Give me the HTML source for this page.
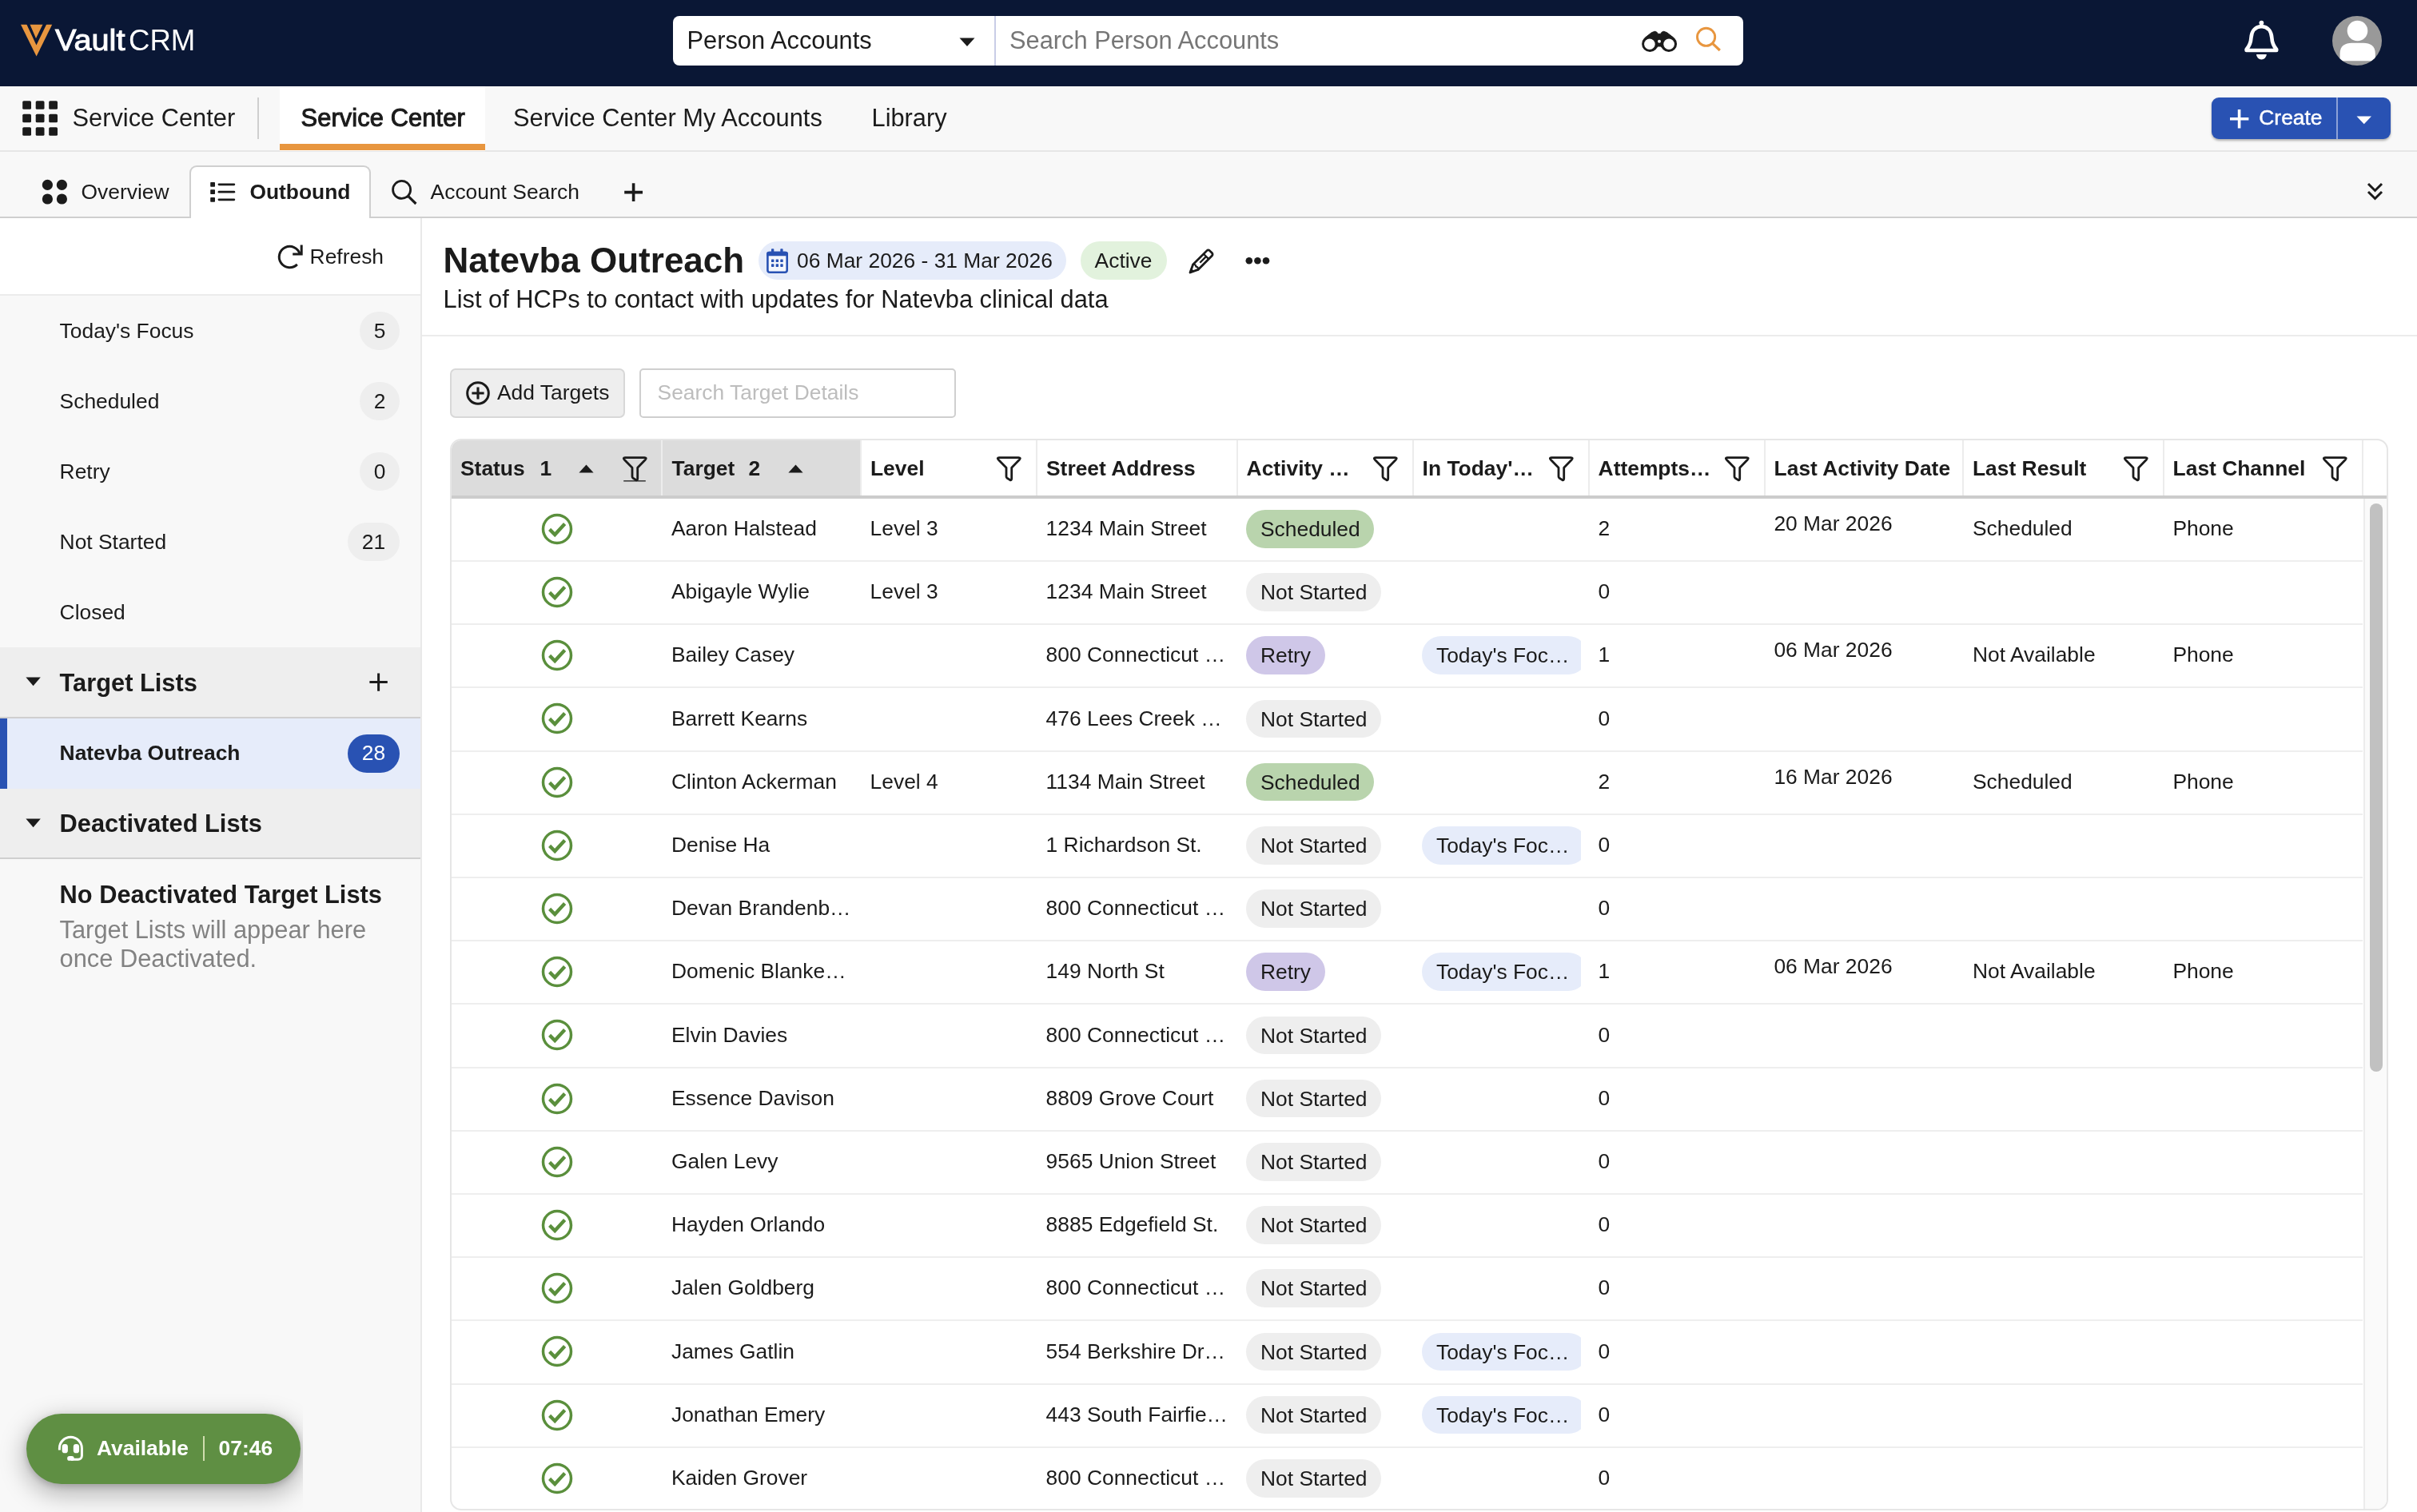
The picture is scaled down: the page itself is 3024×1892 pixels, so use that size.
<!DOCTYPE html>
<html lang="en"><head><meta charset="utf-8"><title>Vault CRM</title><style>
*{box-sizing:border-box;margin:0;padding:0}
html,body{width:3024px;height:1892px;overflow:hidden;background:#f8f8f8}
body{font-family:"Liberation Sans",sans-serif;color:#1b1b1b;font-size:26.4px;position:relative;-webkit-font-smoothing:antialiased}
#w{position:absolute;left:0;top:0;width:3024px;height:1892px;will-change:transform}
.a{position:absolute}
.t{position:absolute;white-space:nowrap;line-height:1}
.b{font-weight:bold}
svg{position:absolute;overflow:visible}
#top{left:0;top:0;width:3024px;height:108px;background:#0a1735}
#nav{left:0;top:108px;width:3024px;height:82px;background:#f8f8f8;border-bottom:2px solid #e6e6e6}
#sub{left:0;top:190px;width:3024px;height:83px;background:#f8f8f8;border-bottom:2px solid #cfcfcf}
#left{left:0;top:273px;width:526px;height:1619px;background:#f8f8f8}
#main{left:528px;top:273px;width:2496px;height:1619px;background:#fff}
.pill{position:absolute;border-radius:40px;white-space:nowrap;line-height:1}
.badge{position:absolute;height:48px;border-radius:24px;background:#eeeeee;text-align:center;line-height:48px;font-size:26.4px}
.hl{position:absolute;height:2px;background:#eeeeee}
</style></head><body><div id="w">
<div id="top" class="a">
<svg style="left:0;top:0" width="260" height="108" viewBox="0 0 260 108">
<polygon points="26,30.8 65.2,30.8 45.6,70.6" fill="#e8963f"/>
<polygon points="33.1,30 37.2,30 45,48.1 53.8,30 58.4,30 45.5,56.4" fill="#0a1735"/>
</svg>
</div>
<div class="t " style="left:68.85px;top:32px;font-size:37.3px;color:#fff;transform-origin:0 50%;transform:translateY(0.2px) scaleX(1.063);-webkit-text-stroke:1px #fff;">Vault</div>
<div class="t " style="left:161.2px;top:32px;font-size:37.3px;color:#fff;transform-origin:0 50%;transform:translateY(0.2px) scaleX(.981);">CRM</div>
<div class="a" style="left:842px;top:20px;width:1339px;height:62px;background:#fff;border-radius:8px"></div>
<div class="a" style="left:1244px;top:20px;width:2px;height:62px;background:#c9cde6"></div>
<div class="t " style="left:859.5px;top:36px;font-size:30.8px;">Person Accounts</div>
<svg style="left:1200px;top:47px" width="20" height="12" viewBox="0 0 20 12"><path d="M0.5,0.5 L19.5,0.5 L10,11 Z" fill="#1b1b1b"/></svg>
<div class="t " style="left:1263px;top:36px;font-size:30.8px;color:#767676;">Search Person Accounts</div>
<svg style="left:2052px;top:37px" width="48" height="30" viewBox="0 0 48 30">
<path d="M6.4,10 L14.4,3.7 L18.5,2.3 L21,3.3 L22.5,5.4 L25.5,5.4 L27,3.3 L29.5,2.3 L33.6,3.7 L41.6,10 L36,21.6 L12,21.6 Z" fill="#1b1b1b" stroke="#1b1b1b" stroke-width="1" stroke-linejoin="round"/>
<circle cx="12.3" cy="17.9" r="10.2" fill="#1b1b1b"/><circle cx="35.9" cy="17.9" r="10.2" fill="#1b1b1b"/>
<circle cx="11.9" cy="18.2" r="6.8" fill="#fff"/><circle cx="36.1" cy="18.2" r="6.8" fill="#fff"/><circle cx="24" cy="14.7" r="2" fill="#fff"/>
<path d="M22,21.6 L26,21.6 L25.4,24.4 L22.6,24.4 Z" fill="#fff"/>
</svg>
<svg style="left:2120px;top:32px" width="36" height="36" viewBox="0 0 36 36">
<circle cx="14.6" cy="14.3" r="11.1" fill="none" stroke="#e8963f" stroke-width="2.9"/>
<line x1="22.6" y1="22.3" x2="31.8" y2="31" stroke="#e8963f" stroke-width="3.2"/>
</svg>
<svg style="left:2800px;top:20px" width="60" height="62" viewBox="0 0 60 62">
<path d="M29.4,13 C20.5,13.6 17,20 16.5,27 C16.1,34 14.4,37.6 10.6,41.8 L10.6,43 L48.2,43 L48.2,41.8 C44.4,37.6 42.7,34 42.3,27 C41.8,20 38.3,13.6 29.4,13 Z" fill="none" stroke="#fff" stroke-width="4.6" stroke-linejoin="round"/>
<circle cx="29.4" cy="8.6" r="2.9" fill="#fff"/>
<path d="M23,48 L35.8,48 A6.4,6.4 0 0 1 23,48 Z" fill="#fff"/>
</svg>
<svg style="left:2918px;top:20px" width="62" height="62" viewBox="0 0 62 62">
<defs><clipPath id="av"><circle cx="31" cy="31" r="31"/></clipPath></defs>
<circle cx="31" cy="31" r="31" fill="#999999"/>
<g clip-path="url(#av)"><circle cx="31.5" cy="18.5" r="12.8" fill="#fff"/>
<path d="M9.6,56.3 L9.6,47 C9.6,37.4 16,33.8 24.5,33.8 L39,33.8 C47.4,33.8 53.8,37.4 53.8,47 L53.8,56.3 Z" fill="#fff"/></g>
</svg>
<div id="nav" class="a"></div>
<svg style="left:0;top:0" width="100" height="190" viewBox="0 0 100 190"><rect x="28.2" y="126.2" width="10.8" height="10.6" rx="1.6" fill="#1b1b1b"/><rect x="44.7" y="126.2" width="10.8" height="10.6" rx="1.6" fill="#1b1b1b"/><rect x="61.2" y="126.2" width="10.8" height="10.6" rx="1.6" fill="#1b1b1b"/><rect x="28.2" y="142.7" width="10.8" height="10.6" rx="1.6" fill="#1b1b1b"/><rect x="44.7" y="142.7" width="10.8" height="10.6" rx="1.6" fill="#1b1b1b"/><rect x="61.2" y="142.7" width="10.8" height="10.6" rx="1.6" fill="#1b1b1b"/><rect x="28.2" y="159.2" width="10.8" height="10.6" rx="1.6" fill="#1b1b1b"/><rect x="44.7" y="159.2" width="10.8" height="10.6" rx="1.6" fill="#1b1b1b"/><rect x="61.2" y="159.2" width="10.8" height="10.6" rx="1.6" fill="#1b1b1b"/></svg>
<div class="t " style="left:90.5px;top:133px;font-size:30.8px;">Service Center</div>
<div class="a" style="left:322px;top:122px;width:2px;height:52px;background:#cfcfcf"></div>
<div class="a" style="left:350px;top:108px;width:257px;height:81px;background:#fff"></div>
<div class="a" style="left:350px;top:180px;width:257px;height:8px;background:#e8963f"></div>
<div class="t " style="left:376.5px;top:133px;font-size:30.8px;-webkit-text-stroke:1.05px #1b1b1b;letter-spacing:0.12px;">Service Center</div>
<div class="t " style="left:642px;top:133px;font-size:30.8px;">Service Center My Accounts</div>
<div class="t " style="left:1090.5px;top:133px;font-size:30.8px;">Library</div>
<div class="a" style="left:2767px;top:122px;width:224px;height:52px;background:#2952b3;border-radius:9px;box-shadow:0 2px 3px rgba(0,0,0,.3)"></div>
<div class="a" style="left:2923px;top:122px;width:2px;height:52px;background:#8da2d8"></div>
<svg style="left:2789px;top:136px" width="26" height="26" viewBox="0 0 26 26"><path d="M12.6,1 V24.4 M1,12.7 H24.4" stroke="#fff" stroke-width="3.6" fill="none"/></svg>
<div class="t " style="left:2826.3px;top:134px;font-size:26.4px;color:#fff;-webkit-text-stroke:0.45px #fff;">Create</div>
<svg style="left:2947.5px;top:144.5px" width="20" height="11" viewBox="0 0 20 11"><path d="M0.5,0.5 L19,0.5 L9.75,10.3 Z" fill="#fff"/></svg>
<div id="sub" class="a"></div>
<svg style="left:0;top:0" width="100" height="273" viewBox="0 0 100 273"><circle cx="59.4" cy="231.4" r="6.6" fill="#1b1b1b"/><circle cx="59.4" cy="249" r="6.6" fill="#1b1b1b"/><circle cx="77.4" cy="231.4" r="6.6" fill="#1b1b1b"/><circle cx="77.4" cy="249" r="6.6" fill="#1b1b1b"/></svg>
<div class="t " style="left:101.5px;top:227px;font-size:26.4px;">Overview</div>
<div class="a" style="left:237px;top:207px;width:227px;height:68px;background:#fff;border:2px solid #cfcfcf;border-bottom:none;border-radius:9px 9px 0 0"></div>
<svg style="left:0;top:0" width="300" height="273" viewBox="0 0 300 273"><rect x="263.2" y="227.9" width="5.8" height="5.8" rx="0.8" fill="#1b1b1b"/><rect x="272.6" y="229.45000000000002" width="21.6" height="2.7" rx="1.3" fill="#1b1b1b"/><rect x="263.2" y="237.29999999999998" width="5.8" height="5.8" rx="0.8" fill="#1b1b1b"/><rect x="272.6" y="238.85" width="21.6" height="2.7" rx="1.3" fill="#1b1b1b"/><rect x="263.2" y="246.9" width="5.8" height="5.8" rx="0.8" fill="#1b1b1b"/><rect x="272.6" y="248.45000000000002" width="21.6" height="2.7" rx="1.3" fill="#1b1b1b"/></svg>
<div class="t b" style="left:312.4px;top:227px;font-size:26.4px;">Outbound</div>
<svg style="left:489px;top:224px" width="34" height="34" viewBox="0 0 34 34">
<circle cx="13.6" cy="13.4" r="11" fill="none" stroke="#1b1b1b" stroke-width="2.8"/>
<line x1="21.6" y1="21.4" x2="31.4" y2="31" stroke="#1b1b1b" stroke-width="3.2"/></svg>
<div class="t " style="left:538.6px;top:227px;font-size:26.4px;">Account Search</div>
<svg style="left:780px;top:228px" width="26" height="26" viewBox="0 0 26 26"><path d="M12.6,1.2 V24 M1.2,12.6 H24" stroke="#1b1b1b" stroke-width="3.6" fill="none"/></svg>
<svg style="left:2961px;top:228px" width="22" height="24" viewBox="0 0 22 24"><path d="M2,2 L10.5,10.5 L19,2 M2,12 L10.5,20.5 L19,12" stroke="#1b1b1b" stroke-width="3" fill="none"/></svg>
<div id="left" class="a"></div>
<div class="a" style="left:526px;top:273px;width:2px;height:1619px;background:#e9e9e9"></div>
<div class="a" style="left:0;top:273px;width:526px;height:97px;background:#fff;border-bottom:2px solid #ececec"></div>
<svg style="left:345.4px;top:302.6px" width="36" height="36" viewBox="0 0 36 36">
<path d="M30.2,15 A13.2,13.2 0 1 0 26.8,27.9" fill="none" stroke="#1b1b1b" stroke-width="3"/>
<path d="M32.2,3.6 L32.2,15 L21.2,15" fill="none" stroke="#1b1b1b" stroke-width="3"/></svg>
<div class="t " style="left:387.6px;top:308px;font-size:26.4px;">Refresh</div>
<div class="t " style="left:74.6px;top:401px;font-size:26.4px;">Today's Focus</div>
<div class="badge" style="left:450.40000000000003px;top:390px;width:49.4px">5</div>
<div class="t " style="left:74.6px;top:489px;font-size:26.4px;">Scheduled</div>
<div class="badge" style="left:450.40000000000003px;top:478px;width:49.4px">2</div>
<div class="t " style="left:74.6px;top:577px;font-size:26.4px;">Retry</div>
<div class="badge" style="left:450.40000000000003px;top:566px;width:49.4px">0</div>
<div class="t " style="left:74.6px;top:665px;font-size:26.4px;">Not Started</div>
<div class="badge" style="left:435.0px;top:654px;width:64.8px">21</div>
<div class="t " style="left:74.6px;top:753px;font-size:26.4px;">Closed</div>
<div class="a" style="left:0;top:810px;width:526px;height:89px;background:#eeeeee;border-bottom:2px solid #cfcfcf"></div>
<svg style="left:31px;top:846.6px" width="22" height="13" viewBox="0 0 22 13"><path d="M1.4,0.5 L19.8,0.5 L10.6,11.3 Z" fill="#1b1b1b"/></svg>
<div class="t b" style="left:74.6px;top:840px;font-size:30.8px;">Target Lists</div>
<svg style="left:461px;top:841px" width="26" height="26" viewBox="0 0 26 26"><path d="M12.6,1.4 V23.8 M1.4,12.6 H23.8" stroke="#1b1b1b" stroke-width="3" fill="none"/></svg>
<div class="a" style="left:0;top:899px;width:526px;height:88px;background:#e6ecfa"></div>
<div class="a" style="left:0;top:899px;width:9px;height:88px;background:#2952b3"></div>
<div class="t b" style="left:74.6px;top:929px;font-size:26.4px;">Natevba Outreach</div>
<div class="badge" style="left:435px;top:919px;width:65px;background:#2952b3;color:#fff;line-height:46px">28</div>
<div class="a" style="left:0;top:987px;width:526px;height:88px;background:#eeeeee;border-bottom:2px solid #cfcfcf"></div>
<svg style="left:31px;top:1023.6px" width="22" height="13" viewBox="0 0 22 13"><path d="M1.4,0.5 L19.8,0.5 L10.6,11.3 Z" fill="#1b1b1b"/></svg>
<div class="t b" style="left:74.6px;top:1016px;font-size:30.8px;">Deactivated Lists</div>
<div class="t b" style="left:74.6px;top:1105px;font-size:30.8px;">No Deactivated Target Lists</div>
<div class="t " style="left:74.6px;top:1149px;font-size:30.8px;color:#828282;">Target Lists will appear here</div>
<div class="t " style="left:74.6px;top:1185px;font-size:30.8px;color:#828282;">once Deactivated.</div>
<div class="a" style="left:0;top:1650px;width:379px;height:242px;overflow:hidden"><div class="a" style="left:33px;top:119px;width:343px;height:88px;border-radius:44px;background:#5f8f43;box-shadow:0 10px 30px 4px rgba(0,0,0,.26), 0 3px 8px rgba(0,0,0,.18)"></div></div>
<svg style="left:70px;top:1794px" width="38" height="38" viewBox="0 0 38 38">
<path d="M4.4,20.4 V18.3 A14,14 0 0 1 32.4,18.3 V27.6 A4.7,4.7 0 0 1 27.7,32.3 H19" fill="none" stroke="#fff" stroke-width="3"/>
<rect x="7.6" y="13.1" width="7.3" height="11.2" rx="3.4" fill="#fff"/><rect x="21.8" y="13.1" width="7.3" height="11.2" rx="3.4" fill="#fff"/>
<rect x="14.1" y="28" width="8.6" height="5.8" rx="2.9" fill="#fff"/>
</svg>
<div class="t b" style="left:121px;top:1799px;font-size:26.4px;color:#fff;">Available</div>
<div class="a" style="left:254px;top:1797px;width:2px;height:31px;background:#cfdcae"></div>
<div class="t b" style="left:273.6px;top:1799px;font-size:26.4px;color:#fff;">07:46</div>
<div id="main" class="a"></div>
<div class="t b" style="left:554.6px;top:304px;font-size:44px;">Natevba Outreach</div>
<div class="pill" style="left:949px;top:302px;width:385px;height:48px;background:#e6ecfa"></div>
<svg style="left:958px;top:311px" width="30" height="32" viewBox="0 0 30 32"><rect x="2.4" y="5.1" width="24.3" height="24.6" rx="2.8" fill="#f4f7fd" stroke="#2952b3" stroke-width="2.6"/><path d="M1.1,9.2 V6.6 A2.8,2.8 0 0 1 3.9,3.8 H25.2 A2.8,2.8 0 0 1 28,6.6 V9.2 Z" fill="#2952b3"/><rect x="7" y="0.2" width="3.3" height="6" rx="0.8" fill="#2952b3"/><rect x="18.3" y="0.2" width="3.3" height="6" rx="0.8" fill="#2952b3"/><rect x="7.0" y="13.4" width="3.4" height="3.7" rx="0.7" fill="#2952b3"/><rect x="12.65" y="13.4" width="3.4" height="3.7" rx="0.7" fill="#2952b3"/><rect x="18.3" y="13.4" width="3.4" height="3.7" rx="0.7" fill="#2952b3"/><rect x="7.0" y="19.2" width="3.4" height="3.7" rx="0.7" fill="#2952b3"/><rect x="12.65" y="19.2" width="3.4" height="3.7" rx="0.7" fill="#2952b3"/><rect x="18.3" y="19.2" width="3.4" height="3.7" rx="0.7" fill="#2952b3"/></svg>
<div class="t " style="left:997px;top:313px;font-size:26.4px;">06 Mar 2026 - 31 Mar 2026</div>
<div class="pill" style="left:1352px;top:302px;width:107.6px;height:48px;background:#e2f2dd"></div>
<div class="t " style="left:1369.6px;top:313px;font-size:26.4px;">Active</div>
<svg style="left:1486px;top:310px" width="34" height="34" viewBox="0 0 34 34">
<g transform="translate(3,31) rotate(-45)" fill="none" stroke="#1b1b1b" stroke-linejoin="round" stroke-linecap="round">
<path d="M0,0 L9.6,-4.5 H34.2 A2.4,2.4 0 0 1 36.6,-2.1 V2.1 A2.4,2.4 0 0 1 34.2,4.5 H9.6 Z" stroke-width="2.8"/>
<path d="M28.4,-4.5 V4.5 M17.4,0 H28.4" stroke-width="2.3" stroke-linecap="butt"/>
<path d="M9.6,-4.5 Q12.4,-2.3 10.4,0 Q12.4,2.3 9.6,4.5" stroke-width="2.2"/>
<path d="M0,0 L4,-1.9 V1.9 Z" fill="#1b1b1b" stroke-width="1.6"/>
</g></svg>
<svg style="left:1556px;top:320px" width="34" height="12" viewBox="0 0 34 12"><circle cx="6.8" cy="6.3" r="4.3" fill="#1b1b1b"/><circle cx="17.4" cy="6.3" r="4.3" fill="#1b1b1b"/><circle cx="28" cy="6.3" r="4.3" fill="#1b1b1b"/></svg>
<div class="t " style="left:554.6px;top:360px;font-size:30.8px;">List of HCPs to contact with updates for Natevba clinical data</div>
<div class="a" style="left:528px;top:419px;width:2496px;height:2px;background:#ececec"></div>
<div class="a" style="left:563px;top:461px;width:219px;height:62px;background:#eeeeee;border:2px solid #d8d8d8;border-radius:7px"></div>
<svg style="left:583.4px;top:476.5px" width="30" height="30" viewBox="0 0 30 30"><circle cx="15" cy="15" r="13.3" fill="none" stroke="#1b1b1b" stroke-width="3"/><path d="M15,7.4 V22.6 M7.4,15 H22.6" stroke="#1b1b1b" stroke-width="3.1" fill="none"/></svg>
<div class="t " style="left:622px;top:478px;font-size:26.4px;">Add Targets</div>
<div class="a" style="left:800px;top:461px;width:396px;height:62px;background:#fff;border:2px solid #cfcfcf;border-radius:5px"></div>
<div class="t " style="left:822.6px;top:478px;font-size:26.4px;color:#bdbdbd;">Search Target Details</div>
<div class="a" style="left:563px;top:549px;width:2425px;height:1341px;border:2px solid #e6e6e6;border-radius:14px;background:#fff;overflow:hidden">
<div class="a" style="left:0;top:0;width:262px;height:69px;background:#dcdcdc"></div>
<div class="a" style="left:263px;top:0;width:248px;height:69px;background:#dcdcdc"></div>
<div class="a" style="left:262px;top:0;width:2px;height:69px;background:#ededed"></div>
<div class="a" style="left:511px;top:0;width:2px;height:69px;background:#ececec"></div>
<div class="a" style="left:731px;top:0;width:2px;height:69px;background:#ececec"></div>
<div class="a" style="left:982px;top:0;width:2px;height:69px;background:#ececec"></div>
<div class="a" style="left:1202px;top:0;width:2px;height:69px;background:#ececec"></div>
<div class="a" style="left:1422px;top:0;width:2px;height:69px;background:#ececec"></div>
<div class="a" style="left:1642px;top:0;width:2px;height:69px;background:#ececec"></div>
<div class="a" style="left:1890px;top:0;width:2px;height:69px;background:#ececec"></div>
<div class="a" style="left:2141px;top:0;width:2px;height:69px;background:#ececec"></div>
<div class="a" style="left:2390px;top:0;width:2px;height:69px;background:#ececec"></div>
<div class="a" style="left:0;top:69px;width:2425px;height:4px;background:#cccccc"></div>
<div class="a" style="left:2392px;top:73px;width:32px;height:1300px;background:#fafafa;border-left:2px solid #ececec"></div>
<div class="a" style="left:2400px;top:79px;width:16px;height:711px;background:#c1c1c1;border-radius:8px"></div>
</div>
<div class="t b" style="left:576px;top:573px;font-size:26.4px;">Status</div>
<div class="t b" style="left:675.6px;top:573px;font-size:26.4px;">1</div>
<svg style="left:723.6px;top:580.6px" width="19" height="11" viewBox="0 0 19 11"><path d="M0.4,10.6 L18.6,10.6 L9.5,0.6 Z" fill="#1b1b1b"/></svg>
<svg style="left:779.4px;top:570.6px" width="30" height="34" viewBox="0 0 30 34"><path d="M3,1.7 H27.4 Q30.6,1.7 28.4,4.2 L18.7,14.2 V27.8 Q18.7,30.6 16.4,29.4 L13,27.2 Q12,26.5 12,25.2 V14.2 L2.2,4.2 Q0,1.7 3,1.7 Z" fill="none" stroke="#1b1b1b" stroke-width="2.8" stroke-linejoin="round"/><rect x="1.2" y="30.2" width="27.6" height="1.3" fill="#1b1b1b"/></svg>
<div class="t b" style="left:840.6px;top:573px;font-size:26.4px;">Target</div>
<div class="t b" style="left:936.6px;top:573px;font-size:26.4px;">2</div>
<svg style="left:986.4px;top:580.6px" width="19" height="11" viewBox="0 0 19 11"><path d="M0.4,10.6 L18.6,10.6 L9.5,0.6 Z" fill="#1b1b1b"/></svg>
<div class="t b" style="left:1089px;top:573px;font-size:26.4px;">Level</div>
<svg style="left:1247.4px;top:570.6px" width="30" height="34" viewBox="0 0 30 34"><path d="M3,1.7 H27.4 Q30.6,1.7 28.4,4.2 L18.7,14.2 V27.8 Q18.7,30.6 16.4,29.4 L13,27.2 Q12,26.5 12,25.2 V14.2 L2.2,4.2 Q0,1.7 3,1.7 Z" fill="none" stroke="#1b1b1b" stroke-width="2.8" stroke-linejoin="round"/></svg>
<div class="t b" style="left:1309px;top:573px;font-size:26.4px;">Street Address</div>
<div class="t b" style="left:1559.6px;top:573px;font-size:26.4px;">Activity …</div>
<svg style="left:1718px;top:570.6px" width="30" height="34" viewBox="0 0 30 34"><path d="M3,1.7 H27.4 Q30.6,1.7 28.4,4.2 L18.7,14.2 V27.8 Q18.7,30.6 16.4,29.4 L13,27.2 Q12,26.5 12,25.2 V14.2 L2.2,4.2 Q0,1.7 3,1.7 Z" fill="none" stroke="#1b1b1b" stroke-width="2.8" stroke-linejoin="round"/></svg>
<div class="t b" style="left:1779.6px;top:573px;font-size:26.4px;">In Today'…</div>
<svg style="left:1938px;top:570.6px" width="30" height="34" viewBox="0 0 30 34"><path d="M3,1.7 H27.4 Q30.6,1.7 28.4,4.2 L18.7,14.2 V27.8 Q18.7,30.6 16.4,29.4 L13,27.2 Q12,26.5 12,25.2 V14.2 L2.2,4.2 Q0,1.7 3,1.7 Z" fill="none" stroke="#1b1b1b" stroke-width="2.8" stroke-linejoin="round"/></svg>
<div class="t b" style="left:1999.6px;top:573px;font-size:26.4px;">Attempts…</div>
<svg style="left:2158px;top:570.6px" width="30" height="34" viewBox="0 0 30 34"><path d="M3,1.7 H27.4 Q30.6,1.7 28.4,4.2 L18.7,14.2 V27.8 Q18.7,30.6 16.4,29.4 L13,27.2 Q12,26.5 12,25.2 V14.2 L2.2,4.2 Q0,1.7 3,1.7 Z" fill="none" stroke="#1b1b1b" stroke-width="2.8" stroke-linejoin="round"/></svg>
<div class="t b" style="left:2219.6px;top:573px;font-size:26.4px;">Last Activity Date</div>
<div class="t b" style="left:2468px;top:573px;font-size:26.4px;">Last Result</div>
<svg style="left:2656.6px;top:570.6px" width="30" height="34" viewBox="0 0 30 34"><path d="M3,1.7 H27.4 Q30.6,1.7 28.4,4.2 L18.7,14.2 V27.8 Q18.7,30.6 16.4,29.4 L13,27.2 Q12,26.5 12,25.2 V14.2 L2.2,4.2 Q0,1.7 3,1.7 Z" fill="none" stroke="#1b1b1b" stroke-width="2.8" stroke-linejoin="round"/></svg>
<div class="t b" style="left:2718.6px;top:573px;font-size:26.4px;">Last Channel</div>
<svg style="left:2905.6px;top:570.6px" width="30" height="34" viewBox="0 0 30 34"><path d="M3,1.7 H27.4 Q30.6,1.7 28.4,4.2 L18.7,14.2 V27.8 Q18.7,30.6 16.4,29.4 L13,27.2 Q12,26.5 12,25.2 V14.2 L2.2,4.2 Q0,1.7 3,1.7 Z" fill="none" stroke="#1b1b1b" stroke-width="2.8" stroke-linejoin="round"/></svg>
<svg style="left:677.2px;top:641.8px" width="40" height="40" viewBox="0 0 40 40"><circle cx="20" cy="20" r="17.5" fill="none" stroke="#5a8f3c" stroke-width="3.5"/><path d="M10.6,20.4 L17.2,27 L29.6,13.4" fill="none" stroke="#5a8f3c" stroke-width="4.4"/></svg>
<div class="t " style="left:840px;top:648px;font-size:26.4px;">Aaron Halstead</div>
<div class="t " style="left:1088.6px;top:648px;font-size:26.4px;">Level 3</div>
<div class="t " style="left:1308.6px;top:648px;font-size:26.4px;">1234 Main Street</div>
<div class="pill" style="left:1559px;top:638.0px;width:160px;height:47.6px;background:#b9d4ad"></div>
<div class="t " style="left:1577px;top:649px;font-size:26.4px;">Scheduled</div>
<div class="t " style="left:1999.6px;top:648px;font-size:26.4px;">2</div>
<div class="t " style="left:2219.4px;top:642px;font-size:26.4px;">20 Mar 2026</div>
<div class="t " style="left:2468px;top:648px;font-size:26.4px;">Scheduled</div>
<div class="t " style="left:2718.4px;top:648px;font-size:26.4px;">Phone</div>
<div class="hl" style="left:565px;top:701px;width:2391px"></div>
<svg style="left:677.2px;top:721.0px" width="40" height="40" viewBox="0 0 40 40"><circle cx="20" cy="20" r="17.5" fill="none" stroke="#5a8f3c" stroke-width="3.5"/><path d="M10.6,20.4 L17.2,27 L29.6,13.4" fill="none" stroke="#5a8f3c" stroke-width="4.4"/></svg>
<div class="t " style="left:840px;top:727px;font-size:26.4px;">Abigayle Wylie</div>
<div class="t " style="left:1088.6px;top:727px;font-size:26.4px;">Level 3</div>
<div class="t " style="left:1308.6px;top:727px;font-size:26.4px;">1234 Main Street</div>
<div class="pill" style="left:1559px;top:717.2px;width:169px;height:47.6px;background:#eeeeee"></div>
<div class="t " style="left:1577px;top:728px;font-size:26.4px;">Not Started</div>
<div class="t " style="left:1999.6px;top:727px;font-size:26.4px;">0</div>
<div class="hl" style="left:565px;top:780px;width:2391px"></div>
<svg style="left:677.2px;top:800.1999999999999px" width="40" height="40" viewBox="0 0 40 40"><circle cx="20" cy="20" r="17.5" fill="none" stroke="#5a8f3c" stroke-width="3.5"/><path d="M10.6,20.4 L17.2,27 L29.6,13.4" fill="none" stroke="#5a8f3c" stroke-width="4.4"/></svg>
<div class="t " style="left:840px;top:806px;font-size:26.4px;">Bailey Casey</div>
<div class="t " style="left:1308.6px;top:806px;font-size:26.4px;">800 Connecticut …</div>
<div class="pill" style="left:1559px;top:796.4px;width:99px;height:47.6px;background:#cfc7e8"></div>
<div class="t " style="left:1577px;top:807px;font-size:26.4px;">Retry</div>
<div class="a" style="left:1779px;top:796.4px;width:199px;height:47.6px;overflow:hidden"><div class="pill" style="left:0;top:0;width:207px;height:47.6px;background:#e6ecfa"></div></div>
<div class="t " style="left:1797px;top:807px;font-size:26.4px;">Today's Foc…</div>
<div class="t " style="left:1999.6px;top:806px;font-size:26.4px;">1</div>
<div class="t " style="left:2219.4px;top:800px;font-size:26.4px;">06 Mar 2026</div>
<div class="t " style="left:2468px;top:806px;font-size:26.4px;">Not Available</div>
<div class="t " style="left:2718.4px;top:806px;font-size:26.4px;">Phone</div>
<div class="hl" style="left:565px;top:859px;width:2391px"></div>
<svg style="left:677.2px;top:879.4px" width="40" height="40" viewBox="0 0 40 40"><circle cx="20" cy="20" r="17.5" fill="none" stroke="#5a8f3c" stroke-width="3.5"/><path d="M10.6,20.4 L17.2,27 L29.6,13.4" fill="none" stroke="#5a8f3c" stroke-width="4.4"/></svg>
<div class="t " style="left:840px;top:886px;font-size:26.4px;">Barrett Kearns</div>
<div class="t " style="left:1308.6px;top:886px;font-size:26.4px;">476 Lees Creek …</div>
<div class="pill" style="left:1559px;top:875.6px;width:169px;height:47.6px;background:#eeeeee"></div>
<div class="t " style="left:1577px;top:887px;font-size:26.4px;">Not Started</div>
<div class="t " style="left:1999.6px;top:886px;font-size:26.4px;">0</div>
<div class="hl" style="left:565px;top:939px;width:2391px"></div>
<svg style="left:677.2px;top:958.5999999999999px" width="40" height="40" viewBox="0 0 40 40"><circle cx="20" cy="20" r="17.5" fill="none" stroke="#5a8f3c" stroke-width="3.5"/><path d="M10.6,20.4 L17.2,27 L29.6,13.4" fill="none" stroke="#5a8f3c" stroke-width="4.4"/></svg>
<div class="t " style="left:840px;top:965px;font-size:26.4px;">Clinton Ackerman</div>
<div class="t " style="left:1088.6px;top:965px;font-size:26.4px;">Level 4</div>
<div class="t " style="left:1308.6px;top:965px;font-size:26.4px;">1134 Main Street</div>
<div class="pill" style="left:1559px;top:954.8px;width:160px;height:47.6px;background:#b9d4ad"></div>
<div class="t " style="left:1577px;top:966px;font-size:26.4px;">Scheduled</div>
<div class="t " style="left:1999.6px;top:965px;font-size:26.4px;">2</div>
<div class="t " style="left:2219.4px;top:959px;font-size:26.4px;">16 Mar 2026</div>
<div class="t " style="left:2468px;top:965px;font-size:26.4px;">Scheduled</div>
<div class="t " style="left:2718.4px;top:965px;font-size:26.4px;">Phone</div>
<div class="hl" style="left:565px;top:1018px;width:2391px"></div>
<svg style="left:677.2px;top:1037.8px" width="40" height="40" viewBox="0 0 40 40"><circle cx="20" cy="20" r="17.5" fill="none" stroke="#5a8f3c" stroke-width="3.5"/><path d="M10.6,20.4 L17.2,27 L29.6,13.4" fill="none" stroke="#5a8f3c" stroke-width="4.4"/></svg>
<div class="t " style="left:840px;top:1044px;font-size:26.4px;">Denise Ha</div>
<div class="t " style="left:1308.6px;top:1044px;font-size:26.4px;">1 Richardson St.</div>
<div class="pill" style="left:1559px;top:1033.9999999999998px;width:169px;height:47.6px;background:#eeeeee"></div>
<div class="t " style="left:1577px;top:1045px;font-size:26.4px;">Not Started</div>
<div class="a" style="left:1779px;top:1033.9999999999998px;width:199px;height:47.6px;overflow:hidden"><div class="pill" style="left:0;top:0;width:207px;height:47.6px;background:#e6ecfa"></div></div>
<div class="t " style="left:1797px;top:1045px;font-size:26.4px;">Today's Foc…</div>
<div class="t " style="left:1999.6px;top:1044px;font-size:26.4px;">0</div>
<div class="hl" style="left:565px;top:1097px;width:2391px"></div>
<svg style="left:677.2px;top:1117.0px" width="40" height="40" viewBox="0 0 40 40"><circle cx="20" cy="20" r="17.5" fill="none" stroke="#5a8f3c" stroke-width="3.5"/><path d="M10.6,20.4 L17.2,27 L29.6,13.4" fill="none" stroke="#5a8f3c" stroke-width="4.4"/></svg>
<div class="t " style="left:840px;top:1123px;font-size:26.4px;">Devan Brandenb…</div>
<div class="t " style="left:1308.6px;top:1123px;font-size:26.4px;">800 Connecticut …</div>
<div class="pill" style="left:1559px;top:1113.1999999999998px;width:169px;height:47.6px;background:#eeeeee"></div>
<div class="t " style="left:1577px;top:1124px;font-size:26.4px;">Not Started</div>
<div class="t " style="left:1999.6px;top:1123px;font-size:26.4px;">0</div>
<div class="hl" style="left:565px;top:1176px;width:2391px"></div>
<svg style="left:677.2px;top:1196.2px" width="40" height="40" viewBox="0 0 40 40"><circle cx="20" cy="20" r="17.5" fill="none" stroke="#5a8f3c" stroke-width="3.5"/><path d="M10.6,20.4 L17.2,27 L29.6,13.4" fill="none" stroke="#5a8f3c" stroke-width="4.4"/></svg>
<div class="t " style="left:840px;top:1202px;font-size:26.4px;">Domenic Blanke…</div>
<div class="t " style="left:1308.6px;top:1202px;font-size:26.4px;">149 North St</div>
<div class="pill" style="left:1559px;top:1192.3999999999999px;width:99px;height:47.6px;background:#cfc7e8"></div>
<div class="t " style="left:1577px;top:1203px;font-size:26.4px;">Retry</div>
<div class="a" style="left:1779px;top:1192.3999999999999px;width:199px;height:47.6px;overflow:hidden"><div class="pill" style="left:0;top:0;width:207px;height:47.6px;background:#e6ecfa"></div></div>
<div class="t " style="left:1797px;top:1203px;font-size:26.4px;">Today's Foc…</div>
<div class="t " style="left:1999.6px;top:1202px;font-size:26.4px;">1</div>
<div class="t " style="left:2219.4px;top:1196px;font-size:26.4px;">06 Mar 2026</div>
<div class="t " style="left:2468px;top:1202px;font-size:26.4px;">Not Available</div>
<div class="t " style="left:2718.4px;top:1202px;font-size:26.4px;">Phone</div>
<div class="hl" style="left:565px;top:1255px;width:2391px"></div>
<svg style="left:677.2px;top:1275.3999999999999px" width="40" height="40" viewBox="0 0 40 40"><circle cx="20" cy="20" r="17.5" fill="none" stroke="#5a8f3c" stroke-width="3.5"/><path d="M10.6,20.4 L17.2,27 L29.6,13.4" fill="none" stroke="#5a8f3c" stroke-width="4.4"/></svg>
<div class="t " style="left:840px;top:1282px;font-size:26.4px;">Elvin Davies</div>
<div class="t " style="left:1308.6px;top:1282px;font-size:26.4px;">800 Connecticut …</div>
<div class="pill" style="left:1559px;top:1271.5999999999997px;width:169px;height:47.6px;background:#eeeeee"></div>
<div class="t " style="left:1577px;top:1283px;font-size:26.4px;">Not Started</div>
<div class="t " style="left:1999.6px;top:1282px;font-size:26.4px;">0</div>
<div class="hl" style="left:565px;top:1335px;width:2391px"></div>
<svg style="left:677.2px;top:1354.6000000000001px" width="40" height="40" viewBox="0 0 40 40"><circle cx="20" cy="20" r="17.5" fill="none" stroke="#5a8f3c" stroke-width="3.5"/><path d="M10.6,20.4 L17.2,27 L29.6,13.4" fill="none" stroke="#5a8f3c" stroke-width="4.4"/></svg>
<div class="t " style="left:840px;top:1361px;font-size:26.4px;">Essence Davison</div>
<div class="t " style="left:1308.6px;top:1361px;font-size:26.4px;">8809 Grove Court</div>
<div class="pill" style="left:1559px;top:1350.8px;width:169px;height:47.6px;background:#eeeeee"></div>
<div class="t " style="left:1577px;top:1362px;font-size:26.4px;">Not Started</div>
<div class="t " style="left:1999.6px;top:1361px;font-size:26.4px;">0</div>
<div class="hl" style="left:565px;top:1414px;width:2391px"></div>
<svg style="left:677.2px;top:1433.8px" width="40" height="40" viewBox="0 0 40 40"><circle cx="20" cy="20" r="17.5" fill="none" stroke="#5a8f3c" stroke-width="3.5"/><path d="M10.6,20.4 L17.2,27 L29.6,13.4" fill="none" stroke="#5a8f3c" stroke-width="4.4"/></svg>
<div class="t " style="left:840px;top:1440px;font-size:26.4px;">Galen Levy</div>
<div class="t " style="left:1308.6px;top:1440px;font-size:26.4px;">9565 Union Street</div>
<div class="pill" style="left:1559px;top:1429.9999999999998px;width:169px;height:47.6px;background:#eeeeee"></div>
<div class="t " style="left:1577px;top:1441px;font-size:26.4px;">Not Started</div>
<div class="t " style="left:1999.6px;top:1440px;font-size:26.4px;">0</div>
<div class="hl" style="left:565px;top:1493px;width:2391px"></div>
<svg style="left:677.2px;top:1513.0px" width="40" height="40" viewBox="0 0 40 40"><circle cx="20" cy="20" r="17.5" fill="none" stroke="#5a8f3c" stroke-width="3.5"/><path d="M10.6,20.4 L17.2,27 L29.6,13.4" fill="none" stroke="#5a8f3c" stroke-width="4.4"/></svg>
<div class="t " style="left:840px;top:1519px;font-size:26.4px;">Hayden Orlando</div>
<div class="t " style="left:1308.6px;top:1519px;font-size:26.4px;">8885 Edgefield St.</div>
<div class="pill" style="left:1559px;top:1509.1999999999998px;width:169px;height:47.6px;background:#eeeeee"></div>
<div class="t " style="left:1577px;top:1520px;font-size:26.4px;">Not Started</div>
<div class="t " style="left:1999.6px;top:1519px;font-size:26.4px;">0</div>
<div class="hl" style="left:565px;top:1572px;width:2391px"></div>
<svg style="left:677.2px;top:1592.2px" width="40" height="40" viewBox="0 0 40 40"><circle cx="20" cy="20" r="17.5" fill="none" stroke="#5a8f3c" stroke-width="3.5"/><path d="M10.6,20.4 L17.2,27 L29.6,13.4" fill="none" stroke="#5a8f3c" stroke-width="4.4"/></svg>
<div class="t " style="left:840px;top:1598px;font-size:26.4px;">Jalen Goldberg</div>
<div class="t " style="left:1308.6px;top:1598px;font-size:26.4px;">800 Connecticut …</div>
<div class="pill" style="left:1559px;top:1588.3999999999999px;width:169px;height:47.6px;background:#eeeeee"></div>
<div class="t " style="left:1577px;top:1599px;font-size:26.4px;">Not Started</div>
<div class="t " style="left:1999.6px;top:1598px;font-size:26.4px;">0</div>
<div class="hl" style="left:565px;top:1651px;width:2391px"></div>
<svg style="left:677.2px;top:1671.4px" width="40" height="40" viewBox="0 0 40 40"><circle cx="20" cy="20" r="17.5" fill="none" stroke="#5a8f3c" stroke-width="3.5"/><path d="M10.6,20.4 L17.2,27 L29.6,13.4" fill="none" stroke="#5a8f3c" stroke-width="4.4"/></svg>
<div class="t " style="left:840px;top:1678px;font-size:26.4px;">James Gatlin</div>
<div class="t " style="left:1308.6px;top:1678px;font-size:26.4px;">554 Berkshire Dr…</div>
<div class="pill" style="left:1559px;top:1667.6px;width:169px;height:47.6px;background:#eeeeee"></div>
<div class="t " style="left:1577px;top:1679px;font-size:26.4px;">Not Started</div>
<div class="a" style="left:1779px;top:1667.6px;width:199px;height:47.6px;overflow:hidden"><div class="pill" style="left:0;top:0;width:207px;height:47.6px;background:#e6ecfa"></div></div>
<div class="t " style="left:1797px;top:1679px;font-size:26.4px;">Today's Foc…</div>
<div class="t " style="left:1999.6px;top:1678px;font-size:26.4px;">0</div>
<div class="hl" style="left:565px;top:1731px;width:2391px"></div>
<svg style="left:677.2px;top:1750.6px" width="40" height="40" viewBox="0 0 40 40"><circle cx="20" cy="20" r="17.5" fill="none" stroke="#5a8f3c" stroke-width="3.5"/><path d="M10.6,20.4 L17.2,27 L29.6,13.4" fill="none" stroke="#5a8f3c" stroke-width="4.4"/></svg>
<div class="t " style="left:840px;top:1757px;font-size:26.4px;">Jonathan Emery</div>
<div class="t " style="left:1308.6px;top:1757px;font-size:26.4px;">443 South Fairfie…</div>
<div class="pill" style="left:1559px;top:1746.7999999999997px;width:169px;height:47.6px;background:#eeeeee"></div>
<div class="t " style="left:1577px;top:1758px;font-size:26.4px;">Not Started</div>
<div class="a" style="left:1779px;top:1746.7999999999997px;width:199px;height:47.6px;overflow:hidden"><div class="pill" style="left:0;top:0;width:207px;height:47.6px;background:#e6ecfa"></div></div>
<div class="t " style="left:1797px;top:1758px;font-size:26.4px;">Today's Foc…</div>
<div class="t " style="left:1999.6px;top:1757px;font-size:26.4px;">0</div>
<div class="hl" style="left:565px;top:1810px;width:2391px"></div>
<svg style="left:677.2px;top:1829.8px" width="40" height="40" viewBox="0 0 40 40"><circle cx="20" cy="20" r="17.5" fill="none" stroke="#5a8f3c" stroke-width="3.5"/><path d="M10.6,20.4 L17.2,27 L29.6,13.4" fill="none" stroke="#5a8f3c" stroke-width="4.4"/></svg>
<div class="t " style="left:840px;top:1836px;font-size:26.4px;">Kaiden Grover</div>
<div class="t " style="left:1308.6px;top:1836px;font-size:26.4px;">800 Connecticut …</div>
<div class="pill" style="left:1559px;top:1825.9999999999998px;width:169px;height:47.6px;background:#eeeeee"></div>
<div class="t " style="left:1577px;top:1837px;font-size:26.4px;">Not Started</div>
<div class="t " style="left:1999.6px;top:1836px;font-size:26.4px;">0</div>
</div></body></html>
